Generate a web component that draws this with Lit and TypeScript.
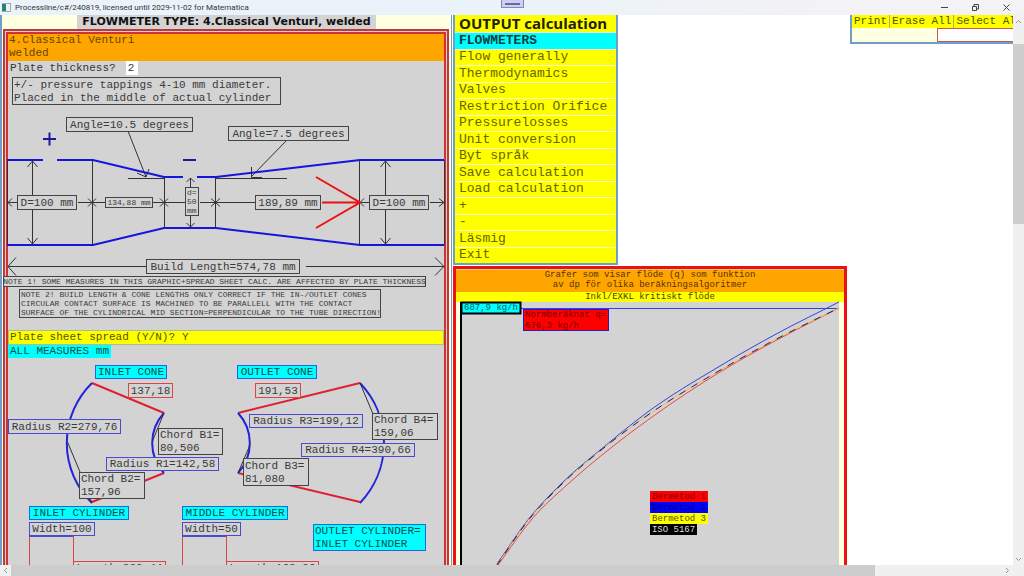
import { LitElement, html, svg, css } from "lit";
import { customElement, state } from "lit/decorators.js";

interface Tag {
  x: number;
  y: number;
  w: number;
  h: number;
  lines: string[];
  tone: string;
}

const tag = (x: number, y: number, w: number, h: number, tone: string, text: string): Tag => ({
  x, y, w, h, tone, lines: text.split("|"),
});

const drawTag = (t: Tag, size: number, step: number) => {
  const first = t.y + t.h / 2 - ((t.lines.length - 1) * step) / 2;
  const single = t.lines.length === 1;
  return svg`<g class="tag ${t.tone} s${size}">
    <rect x=${t.x + 0.5} y=${t.y + 0.5} width=${t.w} height=${t.h}></rect>
    ${t.lines.map(
      (line, i) => svg`<text
        x=${single ? t.x + t.w / 2 + 0.5 : t.x + 2}
        y=${Math.round(first + i * step + size * 0.33)}
        text-anchor=${single ? "middle" : "start"}>${line}</text>`
    )}
  </g>`;
};

// Cubic Hermite curve through the points, with slopes weighted by their spacing.
const curve = (pts: number[][]) => {
  const n = pts.length;
  const seg = (i: number) => (pts[i + 1][1] - pts[i][1]) / (pts[i + 1][0] - pts[i][0]);
  const slope = (i: number) => {
    if (i === 0) return seg(0);
    if (i === n - 1) return seg(n - 2);
    const before = pts[i][0] - pts[i - 1][0];
    const after = pts[i + 1][0] - pts[i][0];
    return (seg(i - 1) * after + seg(i) * before) / (before + after);
  };
  let d = `M${pts[0][0]} ${pts[0][1]}`;
  for (let i = 0; i < n - 1; i++) {
    const [x0, y0] = pts[i];
    const [x1, y1] = pts[i + 1];
    const h = (x1 - x0) / 3;
    d += ` C${x0 + h} ${y0 + h * slope(i)} ${x1 - h} ${y1 - h * slope(i + 1)} ${x1} ${y1}`;
  }
  return d;
};

const mono = css`
  :host {
    font-family: "Liberation Mono", "Courier New", monospace;
    font-size: 11px;
    line-height: 13px;
    color: #333;
  }
  svg {
    display: block;
    width: 100%;
    overflow: visible;
  }
  .tag rect {
    fill: #d3d3d3;
    stroke: #444;
  }
  .tag text {
    fill: #3a3a3a;
    font-size: 11px;
  }
  .tag.s8 text {
    font-size: 8px;
  }
  .tag.s9 text {
    font-size: 9px;
  }
  .tag.blue rect {
    stroke: #4a4ad0;
  }
  .tag.red rect {
    stroke: #dd4444;
  }
  .tag.cyan rect {
    fill: #00ffff;
    stroke: #2266dd;
  }
  .tag.cyan text {
    fill: #065050;
  }
`;

@customElement("venturi-drawing")
export class VenturiDrawing extends LitElement {
  static styles = [
    mono,
    css`
      :host {
        display: block;
      }
      .wall {
        fill: none;
        stroke: #1515dd;
        stroke-width: 2;
      }
      .thin {
        fill: none;
        stroke: #333;
      }
      .flow {
        fill: none;
        stroke: #ee1111;
        stroke-width: 2;
      }
      .sign {
        fill: none;
        stroke: #1a1a99;
        stroke-width: 2;
      }
    `,
  ];

  render() {
    const labels = [
      tag(66, 117, 126, 14, "", "Angle=10.5 degrees"),
      tag(228, 126, 120, 14, "", "Angle=7.5 degrees"),
      tag(17, 195, 59, 14, "", "D=100 mm"),
      tag(255, 195, 65, 14, "", "189,89 mm"),
      tag(369, 195, 59, 14, "", "D=100 mm"),
      tag(146, 259, 153, 14, "", "Build Length=574,78 mm"),
    ];
    const small = [
      tag(105, 197, 47, 10, "", "134,88 mm"),
      tag(3, 276, 422, 10, "", "NOTE 1! SOME MEASURES IN THIS GRAPHIC+SPREAD SHEET CALC. ARE AFFECTED BY PLATE THICKNESS"),
      tag(19, 289, 361, 28, "", "NOTE 2! BUILD LENGTH & CONE LENGTHS ONLY CORRECT IF THE IN-/OUTLET CONES|CIRCULAR CONTACT SURFACE IS MACHINED TO BE PARALLELL WITH THE CONTACT|SURFACE OF THE CYLINDRICAL MID SECTION=PERPENDICULAR TO THE TUBE DIRECTION!"),
      tag(185, 187, 13, 28, "", "d=|50|mm"),
    ];
    return html`<svg viewBox="8 75 436 255" role="img" aria-label="Venturi tube dimensions">
      <path class="thin" d="M7.5 160V245M92.5 160V245M164.5 177V228M215.5 177V228M359.5 160V245M444.5 160V245"></path>
      <path class="thin" d="M32.5 161V244M27.5 167l5-6l5 6M27.5 238l5 6l5-6M385.5 161V244M380.5 167l5-6l5 6M380.5 238l5 6l5-6"></path>
      <path class="thin" d="M190.5 178V227M186.5 182l4-4l4 4M186.5 223l4 4l4-4"></path>
      <path class="thin" d="M8 202.5H17M78 202.5H105M152 202.5H185M200 202.5H255M360 202.5H369M430 202.5H444"></path>
      <path class="thin" d="M12 198.5l-4 4l4 4M88 198.5l8 8M96 198.5l-8 8M160 198.5l8 8M168 198.5l-8 8M211 198.5l9 8M220 198.5l-9 8M355 198.5l4 4l-4 4M364 198.5l-4 4l4 4M439 198.5l5 4l-5 4"></path>
      <path class="thin" d="M128 131L146 177M137 173L146 177L149 169M128 178.5H164M287 140L251 177M251.5 167V177.5H262M216 178.5H287"></path>
      <path class="thin" d="M8 266.5H146M16 257.5L8 266.5L16 275.5M306 266.5H444M435 257.5L444 266.5L435 275.5"></path>
      <path class="wall" d="M7 160H43M57 160H93L164 177H183M197 177H216L360 160H444M7 245H93L164 228H216L360 245H444"></path>
      <path class="sign" d="M43 139H56M49.5 132.5V145.5M183 160H196"></path>
      <path class="flow" d="M322 202.5H360M316 177L360 202.5L316 228"></path>
      ${drawTag(tag(12, 77, 268, 27, "", "+/- pressure tappings 4-10 mm diameter.|Placed in the middle of actual cylinder"), 11, 13)}
      ${labels.map((t) => drawTag(t, 11, 13))} ${small.map((t) => drawTag(t, 8, 9))}
    </svg>`;
  }
}

@customElement("sheet-spread")
export class SheetSpread extends LitElement {
  static styles = [
    mono,
    css`
      :host {
        display: block;
      }
      .arc {
        fill: none;
        stroke: #2222dd;
        stroke-width: 2;
      }
      .edge {
        fill: none;
        stroke: #e02030;
        stroke-width: 2;
      }
      .chord {
        fill: none;
        stroke: #333;
      }
      .side {
        fill: none;
        stroke: #dd4444;
      }
      .top {
        fill: none;
        stroke: #4a4ad0;
      }
    `,
  ];

  render() {
    const labels = [
      tag(95, 365, 71, 13, "cyan", "INLET CONE"),
      tag(237, 365, 79, 13, "cyan", "OUTLET CONE"),
      tag(128, 383, 44, 14, "red", "137,18"),
      tag(255, 383, 45, 14, "red", "191,53"),
      tag(8, 419, 112, 14, "blue", "Radius R2=279,76"),
      tag(249, 414, 113, 13, "blue", "Radius R3=199,12"),
      tag(158, 428, 64, 26, "", "Chord B1=|80,506"),
      tag(372, 413, 65, 26, "", "Chord B4=|159,06"),
      tag(301, 443, 113, 13, "blue", "Radius R4=390,66"),
      tag(106, 457, 112, 13, "blue", "Radius R1=142,58"),
      tag(79, 472, 65, 26, "", "Chord B2=|157,96"),
      tag(243, 458, 65, 27, "", "Chord B3=|81,080"),
      tag(29, 506, 99, 13, "cyan", "INLET CYLINDER"),
      tag(182, 506, 105, 13, "cyan", "MIDDLE CYLINDER"),
      tag(29, 522, 65, 13, "blue", "Width=100"),
      tag(182, 522, 58, 13, "blue", "Width=50"),
      tag(313, 524, 112, 26, "cyan", "OUTLET CYLINDER=|INLET CYLINDER"),
      tag(73, 561, 92, 13, "red", "Length=320,44"),
      tag(226, 561, 92, 13, "red", "Length=163,36"),
    ];
    return html`<svg viewBox="8 358 436 240" role="img" aria-label="Plate sheet spread">
      <path class="edge" d="M92 383L164 413M164 473L92 502M238 413L360 383M238 473L360 502"></path>
      <path class="arc" d="M92 383A84 84 0 0 0 92 503M164 413A44 44 0 0 0 164 473M360 383A87 87 0 0 1 360 503M238 413A44 44 0 0 1 238 473"></path>
      <path class="chord" d="M67.5 442L80 472L92 503M164 413L152.5 441M360 383L373 414M250 445L238 473"></path>
      <path class="side" d="M29.5 536V598M73.5 536V598M182.5 536V598M226.5 536V598"></path>
      <path class="top" d="M29 536.5H73M182 536.5H226"></path>
      ${labels.map((t) => drawTag(t, 11, 13))}
    </svg>`;
  }
}

@customElement("flow-chart")
export class FlowChart extends LitElement {
  static styles = [
    mono,
    css`
      :host {
        display: block;
        box-sizing: border-box;
        border: 3px solid #ee1111;
        background: #ffffe1;
        font-size: 9px;
        line-height: 10px;
        text-align: center;
      }
      .heading {
        margin: 0;
        padding-bottom: 2px;
        border-top: 1px solid #f0c890;
        background: #ffa500;
        color: #553300;
        font-size: 9px;
        font-weight: 400;
      }
      .sub {
        background: #ffff00;
        color: #444400;
      }
      .line {
        fill: none;
      }
      .m1 {
        stroke: #ee4444;
      }
      .m2 {
        stroke: #3344dd;
      }
      .m3 {
        stroke: #eebb55;
      }
      .iso {
        stroke: #22225a;
        stroke-dasharray: 7 7;
      }
      .tag.value rect {
        fill: #00ffff;
        stroke: #000;
        stroke-width: 2;
      }
      .tag.value text {
        fill: #006060;
      }
      .tag.norm rect {
        fill: #ff0000;
        stroke: #3a10c0;
        stroke-width: 1;
      }
      .tag.norm text,
      .tag.k1 text {
        fill: #780000;
      }
      .tag.k1 rect {
        fill: #ff0000;
        stroke: #ff0000;
      }
      .tag.k2 rect {
        fill: #0000ff;
        stroke: #0000ff;
      }
      .tag.k2 text {
        fill: #000088;
      }
      .tag.k3 rect {
        fill: #ffff00;
        stroke: #ffff00;
      }
      .tag.k3 text {
        fill: #505000;
      }
      .tag.k4 rect {
        fill: #000;
        stroke: #000;
      }
      .tag.k4 text {
        fill: #ddd;
      }
    `,
  ];

  render() {
    const iso = curve([[497, 565], [527, 522], [562, 484], [605, 447], [645, 417], [712, 375], [790, 332], [839, 308]]);
    const first = curve([[498, 565], [532, 519], [568, 484], [612, 447], [652, 417], [720, 372], [790, 333], [839, 308]]);
    const second = curve([[497, 564], [527, 521], [562, 483], [605, 446], [645, 414], [720, 366], [778, 333], [839, 302]]);
    const labels = [
      tag(461, 302, 59, 11, "value", "687,9 kg/h"),
      tag(523, 309, 85, 21, "norm", "Normberäknat q=|676,3 kg/h"),
      tag(650, 491, 57, 10, "k1", "Bermetod 1"),
      tag(650, 502, 57, 10, "k2", "Bermetod 2"),
      tag(650, 513, 57, 10, "k3", "Bermetod 3"),
      tag(650, 524, 46, 10, "k4", "ISO 5167"),
    ];
    return html`<h2 class="heading">Grafer som visar flöde (q) som funktion<br />av dp för olika beräkningsalgoritmer</h2>
      <div class="sub">Inkl/EXKL kritiskt flöde</div>
      <svg viewBox="456 302 388 300" role="img" aria-label="Flöde som funktion av dp">
        <rect x="460" y="302" width="379" height="300" fill="#d3d3d3"></rect>
        <rect x="460" y="302" width="2" height="300" fill="#000"></rect>
        <path class="line m2" d="M521 308.5H839"></path>
        <path class="line m1" d=${first}></path>
        <path class="line m2" d=${second}></path>
        <path class="line m3" d=${iso}></path>
        <path class="line iso" d=${iso}></path>
        ${labels.map((t) => drawTag(t, 9, 11))}
      </svg>`;
  }
}

const MENU = [
  "FLOWMETERS", "Flow generally", "Thermodynamics", "Valves", "Restriction Orifice", "Pressurelosses",
  "Unit conversion", "Byt språk", "Save calculation", "Load calculation", "+", "-", "Läsmig", "Exit",
];

@customElement("app-root")
export class AppRoot extends LitElement {
  @state() private active = "FLOWMETERS";

  static styles = [
    mono,
    css`
      :host {
        display: grid;
        grid-template-rows: 15px minmax(0, 1fr) 11px;
        height: 100vh;
        overflow: hidden;
        background: #fff;
      }
      button,
      input {
        margin: 0;
        padding: 0;
        border: 0;
        border-radius: 0;
        background: none;
        font: inherit;
        color: inherit;
      }
      .titlebar {
        display: grid;
        grid-template-columns: 1fr auto 1fr;
        background: linear-gradient(90deg, #eaf3f9 50%, #f3f2f4 80%);
        font-family: Roboto, sans-serif;
        font-size: 8px;
        line-height: 15px;
      }
      .caption {
        display: flex;
        align-items: center;
        gap: 4px;
        padding-left: 2px;
        white-space: nowrap;
      }
      .caption svg,
      .controls svg,
      .bar svg {
        width: 9px;
        height: 9px;
        fill: none;
        stroke: #444;
      }
      .grip {
        width: 23px;
        height: 8px;
        background: #ccd0ee;
        border: 1px solid #8088bb;
        border-top: 0;
        box-sizing: border-box;
        padding: 3px 3px 0;
      }
      .grip::before {
        content: "";
        display: block;
        height: 2px;
        background: #666aa8;
      }
      .controls {
        display: flex;
        justify-content: flex-end;
        align-items: center;
        gap: 22px;
        padding-right: 13px;
      }
      .controls button {
        display: flex;
      }
      .middle {
        display: grid;
        grid-template-columns: minmax(0, 1fr) 11px;
        min-height: 0;
      }
      .work {
        display: grid;
        grid-template-columns: minmax(0, 453fr) minmax(0, 394fr) minmax(0, 166fr);
        align-items: start;
        overflow: hidden;
        min-height: 0;
      }
      .left {
        border: solid #6f9fc8;
        border-width: 0 1px 0 2px;
        margin-right: 1px;
        background: #ffffe1;
      }
      .type {
        margin: 0 auto;
        width: fit-content;
        padding: 0 5px;
        background: #d3d3d3;
        color: #111;
        font: 700 11px/14px "DejaVu Sans", sans-serif;
      }
      .panel {
        margin: 0 2px 0 1px;
        border: 5px double #cc3333;
        background: #d3d3d3;
      }
      .name {
        margin: 0;
        background: #ffa500;
        color: #664400;
        font-size: 11px;
        font-weight: 400;
        padding: 0 0 1px 1px;
      }
      .row {
        display: flex;
        align-items: center;
        gap: 10px;
        height: 14px;
        padding-left: 2px;
      }
      .row input {
        width: 8px;
        height: 14px;
        padding: 0 2px;
        background: #fff;
      }
      .spread {
        height: 13px;
        gap: 7px;
        border: 1px solid #a8c090;
        padding-left: 1px;
        background: #ffff00;
        color: #555500;
      }
      .spread input {
        background: none;
        height: 13px;
        padding: 0;
      }
      .units {
        width: fit-content;
        padding: 0 2px;
        background: #00ffff;
        color: #065050;
      }
      .menu {
        display: grid;
        grid-template-rows: 17px;
        grid-auto-rows: 1fr;
        row-gap: 1px;
        box-sizing: border-box;
        width: 165px;
        height: 250px;
        margin-bottom: 1px;
        border: 2px solid #6f9fc8;
        border-top: 0;
        background: #ffffc8;
      }
      .menu h2 {
        margin: 0;
        padding-left: 4px;
        background: #ffff00;
        color: #222200;
        font: 700 15px/17px "Open Sans", sans-serif;
      }
      .menu button {
        padding-left: 4px;
        background: #ffff00;
        color: #666600;
        font-size: 13px;
        line-height: 14px;
        text-align: left;
      }
      .menu .on {
        background: #00ffff;
        color: #064040;
        font-weight: 700;
      }
      .tools {
        margin-left: 3px;
        width: 200px;
        border: solid #6f9fc8;
        border-width: 0 2px 2px;
        background: #ffffe1;
      }
      .actions {
        display: flex;
        background: #ffff00;
        color: #555500;
      }
      .actions button {
        padding: 0 2px;
        border-right: 1px solid #b0b060;
        white-space: nowrap;
      }
      .field {
        display: block;
        box-sizing: border-box;
        width: 110px;
        height: 14px;
        margin-left: 85px;
        border: 1px solid #cc5555;
        background: #fff;
      }
      .bar {
        display: flex;
        background: #f0f0f0;
      }
      .bar svg {
        stroke: #999;
      }
      .bar span {
        flex: none;
        display: flex;
        align-items: center;
        justify-content: center;
      }
      .bar i {
        background: #cdcdcd;
      }
      .rest {
        flex: 1;
      }
      .v {
        flex-direction: column;
      }
      .v span {
        height: 12px;
      }
      .v i {
        height: 180px;
        margin-top: 17px;
      }
      .h span {
        width: 11px;
      }
      .h i {
        flex: 864;
      }
      .h .rest {
        flex: 127;
      }
    `,
  ];

  render() {
    return html`
      <header class="titlebar">
        <div class="caption">
          <svg viewBox="0 0 9 9"><rect x="0.5" y="0.5" width="8" height="8" fill="#e8f2f0" stroke="#9ab"></rect><rect x="0" y="1" width="4" height="7" fill="#2f7f78" stroke="none"></rect></svg>
          <span>Processline/c#/240819, licensed until 2029-11-02 for Matematica</span>
        </div>
        <div class="grip"></div>
        <div class="controls">
          <button aria-label="Minimize"><svg viewBox="0 0 9 9"><path d="M1 4.5H8"></path></svg></button>
          <button aria-label="Restore"><svg viewBox="0 0 9 9"><path d="M1.5 3.5h4v4h-4zM3 3V1.5h4.5V6H6"></path></svg></button>
          <button aria-label="Close"><svg viewBox="0 0 9 9"><path d="M1.5 1.5l6 6M7.5 1.5l-6 6"></path></svg></button>
        </div>
      </header>
      <div class="middle">
        <main class="work">
          <section class="left">
            <h1 class="type">FLOWMETER TYPE: 4.Classical Venturi, welded</h1>
            <div class="panel">
              <h2 class="name">4.Classical Venturi<br />welded</h2>
              <div class="row"><label for="thick">Plate thickness?</label><input id="thick" .value=${"2"} /></div>
              <venturi-drawing></venturi-drawing>
              <div class="row spread"><label for="spread">Plate sheet spread (Y/N)?</label><input id="spread" .value=${"Y"} /></div>
              <div class="units">ALL MEASURES mm</div>
              <sheet-spread></sheet-spread>
            </div>
          </section>
          <section>
            <nav class="menu" aria-label="Calculations">
              <h2>OUTPUT calculation</h2>
              ${MENU.map(
                (item) => html`<button class=${item === this.active ? "on" : ""} @click=${() => (this.active = item)}>${item}</button>`
              )}
            </nav>
            <flow-chart></flow-chart>
          </section>
          <section class="tools">
            <div class="actions"><button>Print</button><button>Erase All</button><button>Select All</button></div>
            <input class="field" aria-label="Selection" />
          </section>
        </main>
        <div class="bar v">
          <span><svg viewBox="0 0 9 9"><path d="M2 6l2.5-2.5L7 6"></path></svg></span><i></i><div class="rest"></div>
          <span><svg viewBox="0 0 9 9"><path d="M2 3l2.5 2.5L7 3"></path></svg></span>
        </div>
      </div>
      <div class="bar h">
        <span><svg viewBox="0 0 9 9"><path d="M6 2L3.5 4.5L6 7"></path></svg></span><i></i><div class="rest"></div>
        <span><svg viewBox="0 0 9 9"><path d="M3 2l2.5 2.5L3 7"></path></svg></span>
        <span></span>
      </div>
    `;
  }
}
